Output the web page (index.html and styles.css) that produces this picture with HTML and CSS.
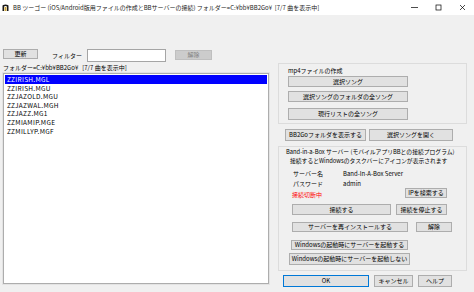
FILE: index.html
```html
<!DOCTYPE html>
<html lang="ja">
<head>
  <meta charset="UTF-8">
  <title>BB ツーゴー</title>
  <link rel="stylesheet" href="styles.css">
</head>
<body>
  <div class="titlebar">
    <svg class="app-icon" width="7" height="7" viewBox="0 0 7 7">
      <path d="M0.5 7 V2 Q0.5 0.5 3.5 0.5 Q6.5 0.5 6.5 2 V7 H5 V3 Q5 2 3.5 2 Q2 2 2 3 V7 Z" fill="#1a1a1a"/>
      <rect x="2.5" y="3" width="2" height="4" fill="#c9a23a"/>
    </svg>
    <span class="title">BB ツーゴー (iOS/Android版用ファイルの作成とBBサーバーの接続) フォルダー=C:¥bb¥BB2Go¥&nbsp;&nbsp;[7/7 曲を表示中]</span>
    <div class="controls">
      <span class="ctl"><svg width="7" height="7" viewBox="0 0 7 7"><line x1="0" y1="3.5" x2="7" y2="3.5" stroke="#000" stroke-width="0.7"/></svg></span>
      <span class="ctl"><svg width="7" height="7" viewBox="0 0 7 7"><rect x="1" y="1" width="5" height="5" fill="none" stroke="#000" stroke-width="0.7"/></svg></span>
      <span class="ctl"><svg width="7" height="7" viewBox="0 0 7 7"><path d="M1 1 L6 6 M6 1 L1 6" stroke="#000" stroke-width="0.7"/></svg></span>
    </div>
  </div>

  <div class="toolbar">
    <button class="btn btn-update">更新</button>
    <span class="filter-label">フィルター</span>
    <input class="filter-input" type="text">
    <button class="btn btn-clear" disabled>解除</button>
  </div>

  <div class="main">
    <div class="left">
      <div class="folder">フォルダー=C:¥bb¥BB2Go¥&nbsp;&nbsp;&nbsp;[7/7 曲を表示中]</div>
      <div class="list">
        <div class="item selected">ZZIRISH.MGL</div>
        <div class="item">ZZIRISH.MGU</div>
        <div class="item">ZZJAZOLD.MGU</div>
        <div class="item">ZZJAZWAL.MGH</div>
        <div class="item">ZZJAZZ.MG1</div>
        <div class="item">ZZMIAMIP.MGE</div>
        <div class="item">ZZMILLYP.MGF</div>
      </div>
    </div>

    <div class="right">
      <div class="group mp4">
        <div class="group-label">mp4ファイルの作成</div>
        <button class="btn mp4-btn b1">選択ソング</button>
        <button class="btn mp4-btn b2">選択ソングのフォルダの全ソング</button>
        <button class="btn mp4-btn b3">現行リストの全ソング</button>
      </div>

      <div class="row bb2go">
        <button class="btn btn-folder">BB2Goフォルダを表示する</button>
        <button class="btn btn-open">選択ソングを開く</button>
      </div>

      <div class="group server">
        <div class="desc">
          <div>Band-in-a-Box サーバー (モバイルアプリBBとの接続プログラム)</div>
          <div class="desc2">接続するとWindowsのタスクバーにアイコンが表示されます</div>
        </div>
        <div class="info">
          <div class="info-row"><span class="info-key">サーバー名</span><span>Band-In-A-Box Server</span></div>
          <div class="info-row"><span class="info-key">パスワード</span><span>admin</span></div>
        </div>
        <div class="row status-row">
          <span class="status">接続切断中</span>
          <button class="btn btn-ip">IPを検索する</button>
        </div>
        <div class="row connect-row">
          <button class="btn btn-connect">接続する</button>
          <button class="btn btn-stop">接続を停止する</button>
        </div>
        <div class="row reinstall-row">
          <button class="btn btn-reinstall">サーバーを再インストールする</button>
          <button class="btn btn-unlock">解除</button>
        </div>
        <div class="row">
          <button class="btn btn-start-on">Windowsの起動時にサーバーを起動する</button>
        </div>
        <div class="row">
          <button class="btn btn-start-off">Windowsの起動時にサーバーを起動しない</button>
        </div>
      </div>

      <div class="row dialog-row">
        <button class="btn btn-ok">OK</button>
        <button class="btn btn-cancel">キャンセル</button>
        <button class="btn btn-help">ヘルプ</button>
      </div>
    </div>
  </div>
</body>
</html>
```

FILE: styles.css
```css
* {
  box-sizing: border-box;
}
body {
  margin: 0;
  width: 474px;
  height: 292px;
  overflow: hidden;
  background: #f0f0f0;
  font-family: "Noto Sans CJK JP", "Noto Sans", sans-serif;
  font-size: 6px;
  color: #000;
}
.titlebar {
  height: 15px;
  background: #fff;
  display: flex;
  align-items: center;
  padding-left: 2px;
}
.app-icon {
  margin-right: 4px;
}
.title {
  flex: 1;
  white-space: nowrap;
  font-size: 6px;
  color: #222;
}
.controls {
  display: flex;
}
.ctl {
  width: 24px;
  display: flex;
  justify-content: center;
}
.btn {
  margin: 0;
  padding: 0;
  height: 11px;
  font: inherit;
  font-size: 6px;
  line-height: 1;
  color: #000;
  background: #e1e1e1;
  border: 1px solid #adadad;
  white-space: nowrap;
}
.btn:disabled {
  background: #cccccc;
  border-color: #bfbfbf;
  color: #838383;
}
.row {
  display: flex;
}

/* toolbar */
.toolbar {
  display: flex;
  align-items: flex-start;
  height: 14px;
  margin-top: 34px;
  padding-left: 3px;
}
.btn-update {
  width: 35px;
  height: 10px;
}
.filter-label {
  margin: 2px 0 0 14px;
  width: 35px;
}
.filter-input {
  width: 79px;
  height: 13px;
  margin: 0;
  border: 1px solid #a5a5a5;
  background: #fff;
}
.btn-clear {
  width: 37px;
  height: 10px;
  margin: 1px 0 0 9px;
}

/* main */
.main {
  display: grid;
  grid-template-columns: 266px 189px;
  column-gap: 9px;
  padding-left: 3px;
}
.folder {
  height: 10px;
  line-height: 10px;
  white-space: nowrap;
}
.list {
  height: 211px;
  background: #fff;
  border: 1px solid #adadad;
  box-shadow: 0 0 0 1px #e3e3e3;
  padding: 1px 1px 0;
  font-size: 6.5px;
  letter-spacing: 0.3px;
}
.item {
  height: 8.6px;
  line-height: 8.6px;
  padding-left: 2px;
}
.item.selected {
  background: #0000ff;
  color: #fff;
}

/* right column */
.group {
  border: 1px solid #dcdcdc;
}
.mp4 {
  height: 61px;
  padding-left: 9px;
}
.group-label {
  margin-top: 2px;
  height: 10px;
  line-height: 9px;
}
.mp4-btn {
  display: block;
  width: 120px;
}
.b2 {
  margin-top: 4px;
}
.b3 {
  margin-top: 6px;
  height: 12px;
}
.bb2go {
  margin-top: 5px;
  padding-left: 7px;
  gap: 3px;
}
.bb2go .btn {
  height: 12px;
}
.btn-folder {
  width: 81px;
}
.btn-open {
  width: 84px;
}
.server {
  margin-top: 5px;
  height: 125px;
}
.desc {
  margin-top: 1px;
  padding-left: 7px;
  font-size: 5.8px;
  line-height: 8.5px;
  white-space: nowrap;
}
.desc2 {
  padding-left: 4px;
}
.info {
  margin-top: 4px;
  padding-left: 14px;
}
.info-row {
  display: flex;
  height: 9.5px;
  line-height: 9.5px;
}
.info-key {
  width: 50px;
}
.status-row {
  height: 11px;
  padding-left: 13px;
  align-items: flex-end;
}
.status {
  flex: 1;
  color: #ff0000;
  line-height: 8px;
}
.btn-ip {
  width: 42px;
  height: 10px;
  margin-right: 19px;
  align-self: flex-start;
}
.connect-row {
  margin-top: 5px;
  padding-left: 13px;
  gap: 5px;
}
.btn-connect {
  width: 99px;
}
.btn-stop {
  width: 51px;
}
.reinstall-row {
  margin-top: 7px;
  padding-left: 13px;
  gap: 8px;
}
.btn-reinstall {
  width: 116px;
  height: 10px;
}
.btn-unlock {
  width: 36px;
  height: 10px;
}
.btn-start-on {
  margin: 8px 0 0 12px;
  width: 117px;
  height: 10px;
}
.btn-start-off {
  margin: 3px 0 0 10px;
  width: 121px;
  height: 12px;
}
.dialog-row {
  margin-top: 4px;
  padding-left: 5px;
}
.dialog-row .btn {
  height: 12px;
}
.btn-ok {
  width: 86px;
  border-color: #0078d7;
}
.btn-cancel {
  width: 39px;
  margin-left: 5px;
}
.btn-help {
  width: 34px;
  margin-left: 5px;
}
```
